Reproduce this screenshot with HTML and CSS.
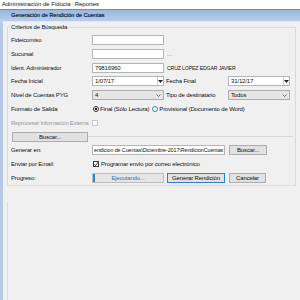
FILE: index.html
```html
<!DOCTYPE html>
<html lang="es">
<head>
    <meta charset="UTF-8">
    <meta name="viewport" content="width=device-width, initial-scale=1.0">
    <title>Generación de Rendición de Cuentas</title>
    <link rel="stylesheet" href="styles.css">
</head>
<body>

    <!-- Menu -->
    <div class="menubar">
        <span>Administración de Fiducia</span>
        <span>Reportes</span>
    </div>

    <!-- Window title -->
    <div class="titlebar">Generación de Rendición de Cuentas</div>

    <div class="main">
        <fieldset class="group">
            <legend>Criterios de Búsqueda</legend>
            <div class="form">
                <span class="label">Fideicomiso</span>
                <div class="input"></div>
                <span></span><span></span>

                <span class="label">Sucursal</span>
                <div class="input"></div>
                <span class="dots">...</span><span></span>

                <span class="label">Ident. Administrador</span>
                <div class="input">79816960</div>
                <span class="name">CRUZ LOPEZ EDGAR JAVIER</span>

                <span class="label">Fecha Inicial</span>
                <div class="input date">
                    <span class="date-value">1/07/17</span>
                    <span class="date-btn"><svg width="5" height="3" viewBox="0 0 5 3"><path d="M0 0h5L2.5 3z" fill="#222"/></svg></span>
                </div>
                <span class="label label-2">Fecha Final</span>
                <div class="input date">
                    <span class="date-value">31/12/17</span>
                    <span class="date-btn"><svg width="5" height="3" viewBox="0 0 5 3"><path d="M0 0h5L2.5 3z" fill="#222"/></svg></span>
                </div>

                <span class="label">Nivel de Cuentas PYG</span>
                <div class="select">
                    <span>4</span>
                    <svg width="5" height="3" viewBox="0 0 5 3"><path d="M0.5 0.5L2.5 2.5L4.5 0.5" fill="none" stroke="#555" stroke-width="0.8"/></svg>
                </div>
                <span class="label label-2">Tipo de destinatario</span>
                <div class="select">
                    <span>Todos</span>
                    <svg width="5" height="3" viewBox="0 0 5 3"><path d="M0.5 0.5L2.5 2.5L4.5 0.5" fill="none" stroke="#555" stroke-width="0.8"/></svg>
                </div>

                <span class="label">Formato de Salida</span>
                <div class="radios">
                    <span class="radio"><span class="radio-dot checked"></span>Final (Sólo Lectura)</span>
                    <span class="radio"><span class="radio-dot focus"></span>Provisional (Documento de Word)</span>
                </div>

                <span class="label disabled">Reprocesar Información Externa</span>
                <div><span class="check check-disabled"></span></div>
                <span></span><span></span>

                <div class="search-row">
                    <div class="button btn-search">Buscar...</div>
                    <div class="separator"></div>
                </div>

                <span class="label">Generar en:</span>
                <div class="input path">endicion de Cuentas\Diciembre-2017\RendicionCuentas</div>
                <div class="button btn-browse">Buscar...</div>

                <span class="label">Enviar por Email:</span>
                <div class="check-row">
                    <span class="check"><svg width="6" height="6" viewBox="0 0 6 6"><path d="M1 3.2L2.4 4.6L5 1.4" fill="none" stroke="#222" stroke-width="0.9"/></svg></span>
                    Programar envío por correo electrónico
                </div>

                <span class="label">Progreso:</span>
                <div class="progress"><span class="progress-fill"></span>Ejecutando...</div>
                <div class="button btn-default">Generar Rendición</div>
                <div class="button btn-cancel">Cancelar</div>
            </div>
        </fieldset>

        <div class="results"></div>
    </div>

</body>
</html>
```

FILE: styles.css
```css
/* Reset */
* {
    margin: 0;
    padding: 0;
    box-sizing: border-box;
}

body {
    display: flex;
    flex-direction: column;
    height: 100vh;
    background-color: #f0f0f0;
    color: #111;
    font-family: "Liberation Sans", Arial, sans-serif;
    font-size: 6px;
    letter-spacing: -0.15px;
    overflow: hidden;
}

/* Menu bar */
.menubar {
    display: flex;
    gap: 4px;
    height: 9px;
    padding-left: 2px;
    background-color: #ffffff;
    line-height: 9px;
    letter-spacing: 0;
}

/* Window title */
.titlebar {
    height: 12px;
    padding-left: 11px;
    border-top: 1px solid #858a90;
    background: linear-gradient(#9ab7dd, #b8cdea);
    color: #1c2d52;
    font-size: 5.6px;
    line-height: 11px;
    letter-spacing: 0;
    text-shadow: 0.3px 0 0 #1c2d52;
}

.main {
    display: flex;
    flex-direction: column;
    flex: 1;
    padding: 1px 4px 0 4px;
    border-top: 1px solid #dfe8f4;
    border-left: 3px solid #b7c9e4;
}

/* Group box */
.group {
    border: 1px solid #dadada;
    padding: 4px 4px 2px 3px;
}

.group legend {
    margin-left: -1px;
    padding: 0 1px;
    line-height: 8px;
}

.form {
    display: grid;
    grid-template-columns: 81px 72px 64px 62px;
    grid-auto-rows: 10px;
    row-gap: 3.8px;
    align-items: center;
}

.label {
    white-space: nowrap;
}

.label-2 {
    padding-left: 2px;
}

.disabled {
    color: #9a9a9a;
    letter-spacing: -0.3px;
}

.input {
    height: 10px;
    padding: 0 2px;
    border: 1px solid #b5b5b5;
    background-color: #fff;
    line-height: 8px;
    white-space: nowrap;
    overflow: hidden;
}

.dots {
    padding-left: 3px;
    color: #8a6a8a;
}

.name {
    grid-column: span 2;
    padding-left: 3px;
    font-size: 5.2px;
}

/* Date pickers */
.date {
    display: flex;
    padding-right: 0;
}

.date-value {
    flex: 1;
}

.date-btn {
    display: flex;
    align-items: center;
    justify-content: center;
    width: 6px;
    border-left: 1px solid #d0d0d0;
}

/* Combos */
.select {
    display: flex;
    align-items: center;
    justify-content: space-between;
    height: 10px;
    padding: 0 2px;
    border: 1px solid #adadad;
    background-color: #e5e5e5;
}

/* Radios and checks */
.radios {
    grid-column: span 3;
    display: flex;
    gap: 3px;
    padding-left: 1px;
}

.radio {
    display: flex;
    align-items: center;
    gap: 1px;
}

.radio-dot {
    width: 6px;
    height: 6px;
    border: 1px solid #333;
    border-radius: 50%;
    background-color: #fff;
}

.radio-dot.checked {
    background: radial-gradient(circle, #222 1.2px, #fff 1.6px);
}

.radio-dot.focus {
    border-color: #3b7fc4;
}

.check {
    display: inline-flex;
    width: 6px;
    height: 6px;
    border: 1px solid #333;
    background-color: #fff;
}

.check svg {
    margin: -1px;
}

.check-disabled {
    display: block;
    border-color: #c8c8c8;
}

.check-row {
    grid-column: span 3;
    display: flex;
    align-items: center;
    gap: 2px;
    padding-left: 1px;
}

/* Buttons */
.button {
    height: 10px;
    border: 1px solid #adadad;
    background-color: #e1e1e1;
    text-align: center;
    line-height: 8px;
    white-space: nowrap;
}

.search-row {
    grid-column: 1 / -1;
    display: flex;
    align-items: center;
    margin-right: -3px;
}

.btn-search {
    width: 76px;
    margin-left: 1px;
}

.separator {
    flex: 1;
    height: 1px;
    background-color: #d5d5d5;
}

.path {
    grid-column: span 2;
    margin-right: 3px;
    padding-left: 1px;
    font-size: 5.4px;
    letter-spacing: -0.1px;
}

.btn-browse {
    width: 38px;
    margin-left: 1px;
}

.btn-default {
    width: 58px;
    margin-left: 3px;
    border-color: #2a7fd4;
}

.btn-cancel {
    width: 37px;
    margin-left: 1px;
}

/* Progress */
.progress {
    position: relative;
    height: 10px;
    border: 1px solid #bcbcbc;
    background-color: #e6e6e6;
    color: #3a6fb8;
    text-align: center;
    line-height: 8px;
}

.progress-fill {
    position: absolute;
    left: 0;
    top: 0;
    width: 2px;
    height: 100%;
    background-color: #2a86dc;
}

/* Lower panel */
.results {
    flex: 1;
    margin-top: 16px;
    border-left: 1px solid #dcdcdc;
}
```
